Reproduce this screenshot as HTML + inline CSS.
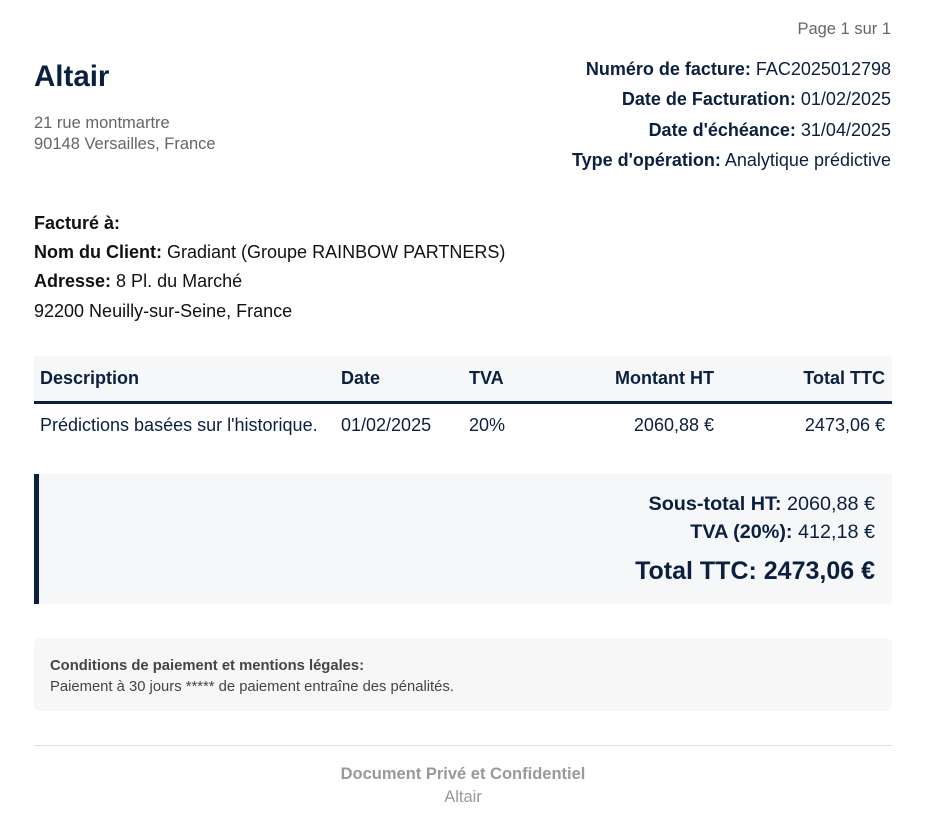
<!DOCTYPE html><html><head><meta charset="utf-8"><style>
body{margin:0;width:934px;height:819px;background:#fff;font-family:"Liberation Sans",sans-serif;position:relative;overflow:hidden}
.a{position:absolute;white-space:nowrap}
.n{color:#0b1f3f}
.r{text-align:right}
</style></head><body>
<div class="a" style="right:43px;top:20px;font-size:16.5px;color:#666">Page 1 sur 1</div>
<div class="a n" style="left:34px;top:60px;font-size:29.5px;font-weight:bold">Altair</div>
<div class="a" style="left:34px;top:113px;font-size:16.5px;color:#666;line-height:21px">21 rue montmartre<br>90148 Versailles, France</div>
<div class="a n r" style="right:43px;top:54px;font-size:18px;line-height:30.3px">
<b>Numéro de facture:</b> FAC2025012798<br><b>Date de Facturation:</b> 01/02/2025<br><b>Date d'échéance:</b> 31/04/2025<br><b>Type d'opération:</b> Analytique prédictive</div>
<div class="a" style="left:34px;top:209px;font-size:18px;line-height:29.2px;color:#111">
<b>Facturé à:</b><br><b>Nom du Client:</b> Gradiant (Groupe RAINBOW PARTNERS)<br><b>Adresse:</b> 8 Pl. du Marché<br>92200 Neuilly-sur-Seine, France</div>
<div class="a" style="left:34px;top:356px;width:858px;height:45px;background:#f5f7f9;border-bottom:3px solid #0b1f3f"></div>
<div class="a n" style="top:368px;left:40px;font-size:18px;font-weight:bold">Description</div>
<div class="a n" style="top:368px;left:341px;font-size:18px;font-weight:bold">Date</div>
<div class="a n" style="top:368px;left:469px;font-size:18px;font-weight:bold">TVA</div>
<div class="a n" style="top:368px;right:220px;font-size:18px;font-weight:bold">Montant HT</div>
<div class="a n" style="top:368px;right:49px;font-size:18px;font-weight:bold">Total TTC</div>
<div class="a n" style="top:415px;left:40px;font-size:18px">Prédictions basées sur l'historique.</div>
<div class="a n" style="top:415px;left:341px;font-size:18px">01/02/2025</div>
<div class="a n" style="top:415px;left:469px;font-size:18px">20%</div>
<div class="a n" style="top:415px;right:220px;font-size:18px">2060,88 €</div>
<div class="a n" style="top:415px;right:49px;font-size:18px">2473,06 €</div>
<div class="a" style="left:34px;top:474px;width:853px;height:130px;background:#f6f7f9;border-left:5px solid #0b1f3f"></div>
<div class="a n r" style="right:59px;top:491px;font-size:19.8px;line-height:27.5px"><b>Sous-total HT:</b> 2060,88 €<br><b>TVA (20%):</b> 412,18 €</div>
<div class="a n" style="right:59px;top:557px;font-size:25px;font-weight:bold">Total TTC: 2473,06 €</div>
<div class="a" style="left:34px;top:638px;width:858px;height:73px;background:#f7f7f8;border-radius:6px"></div>
<div class="a" style="left:50px;top:656px;font-size:14.8px;line-height:21px;color:#444"><b>Conditions de paiement et mentions légales:</b><br>Paiement à 30 jours ***** de paiement entraîne des pénalités.</div>
<div class="a" style="left:34px;top:745px;width:858px;border-top:1px solid #ddd"></div>
<div class="a" style="left:34px;width:858px;top:763px;text-align:center;font-size:16.5px;color:#999;line-height:23px"><b>Document Privé et Confidentiel</b><br>Altair</div>
</body></html>
